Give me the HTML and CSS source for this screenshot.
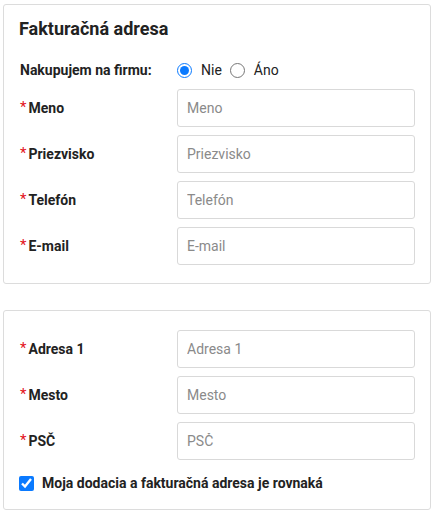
FILE: index.html
```html
<!DOCTYPE html>
<html lang="sk">
<head>
<meta charset="utf-8">
<title>Fakturačná adresa</title>
<link rel="stylesheet" href="styles.css">
</head>
<body>
<div class="page">
  <section class="card card-billing">
    <h2 class="card-title">Fakturačná adresa</h2>
    <div class="form-grid">
      <div class="label">Nakupujem na firmu:</div>
      <div class="radios">
        <label class="radio"><input type="radio" name="firma" checked><span>Nie</span></label>
        <label class="radio"><input type="radio" name="firma"><span>Áno</span></label>
      </div>

      <label class="label" for="meno"><span class="req">*</span>Meno</label>
      <input class="field" id="meno" type="text" placeholder="Meno">

      <label class="label" for="priezvisko"><span class="req">*</span>Priezvisko</label>
      <input class="field" id="priezvisko" type="text" placeholder="Priezvisko">

      <label class="label" for="telefon"><span class="req">*</span>Telefón</label>
      <input class="field" id="telefon" type="text" placeholder="Telefón">

      <label class="label" for="email"><span class="req">*</span>E-mail</label>
      <input class="field" id="email" type="text" placeholder="E-mail">
    </div>
  </section>

  <section class="card card-address">
    <div class="form-grid">
      <label class="label" for="adresa1"><span class="req">*</span>Adresa 1</label>
      <input class="field" id="adresa1" type="text" placeholder="Adresa 1">

      <label class="label" for="mesto"><span class="req">*</span>Mesto</label>
      <input class="field" id="mesto" type="text" placeholder="Mesto">

      <label class="label" for="psc"><span class="req">*</span>PSČ</label>
      <input class="field" id="psc" type="text" placeholder="PSČ">
    </div>
    <label class="check"><input type="checkbox" checked><span>Moja dodacia a fakturačná adresa je rovnaká</span></label>
  </section>
</div>
</body>
</html>
```
FILE: styles.css
```css
* { box-sizing: border-box; }

html, body {
  margin: 0;
  padding: 0;
  background: #fff;
}

body {
  font-family: Roboto, "Liberation Sans", Arial, sans-serif;
  font-size: 14px;
  color: #222;
}

.page {
  padding: 4px 4px 0 3px;
  display: flex;
  flex-direction: column;
  gap: 26px;
  width: 435px;
}

.card {
  width: 428px;
  border: 1px solid #dcdcdc;
  border-radius: 3px;
  padding: 0 15px;
}

.card-billing {
  padding-top: 13px;
  padding-bottom: 18px;
}

.card-address {
  padding-top: 19px;
  padding-bottom: 18px;
}

.card-title {
  margin: 0 0 19px;
  font-size: 18px;
  font-weight: 700;
  line-height: 22px;
  color: #222;
}

.form-grid {
  display: grid;
  grid-template-columns: 158px 238px;
  row-gap: 8px;
  align-items: center;
}

.label {
  font-weight: 700;
  font-size: 14px;
  line-height: 22px;
  display: flex;
  align-items: center;
  padding-left: 1px;
}

.req {
  color: #e3101b;
  font-weight: 400;
  font-size: 15px;
  margin-right: 2px;
  position: relative;
  top: -1px;
}

.radios {
  display: flex;
  align-items: center;
  height: 22px;
  gap: 8px;
}

.radio {
  display: flex;
  align-items: center;
  gap: 9px;
  cursor: pointer;
}

.radio input {
  margin: 0;
  width: 15px;
  height: 15px;
  accent-color: #0a7aff;
}

.field {
  display: block;
  width: 238px;
  height: 38px;
  margin: 0;
  border: 1px solid #d9d9d9;
  border-radius: 3px;
  padding: 0 9px;
  font-family: inherit;
  font-size: 14px;
  color: #222;
  background: #fff;
}

.field::placeholder {
  color: #8a8a8a;
}

.check {
  display: flex;
  align-items: center;
  gap: 8px;
  margin-top: 16px;
  font-weight: 700;
  line-height: 15px;
  cursor: pointer;
}

.check input {
  margin: 0;
  width: 15px;
  height: 15px;
  accent-color: #0a7aff;
}
```
